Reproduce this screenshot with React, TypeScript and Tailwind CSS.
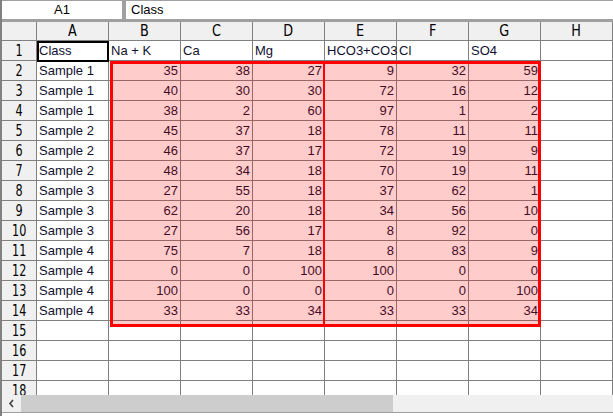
import React from 'react';

const cols = ['A', 'B', 'C', 'D', 'E', 'F', 'G', 'H'];

const header = ['Class', 'Na + K', 'Ca', 'Mg', 'HCO3+CO3', 'Cl', 'SO4'];

const rows: [string, number[]][] = [
  ['Sample 1', [35, 38, 27, 9, 32, 59]],
  ['Sample 1', [40, 30, 30, 72, 16, 12]],
  ['Sample 1', [38, 2, 60, 97, 1, 2]],
  ['Sample 2', [45, 37, 18, 78, 11, 11]],
  ['Sample 2', [46, 37, 17, 72, 19, 9]],
  ['Sample 2', [48, 34, 18, 70, 19, 11]],
  ['Sample 3', [27, 55, 18, 37, 62, 1]],
  ['Sample 3', [62, 20, 18, 34, 56, 10]],
  ['Sample 3', [27, 56, 17, 8, 92, 0]],
  ['Sample 4', [75, 7, 18, 8, 83, 9]],
  ['Sample 4', [0, 0, 100, 100, 0, 0]],
  ['Sample 4', [100, 0, 0, 0, 0, 100]],
  ['Sample 4', [33, 33, 34, 33, 33, 34]],
];

const thin = { fontFamily: '"DejaVu Sans", sans-serif' };
const cellFont = { fontFamily: '"Liberation Sans", Arial, sans-serif' };

function RowHead({ n }: { n: number }) {
  return (
    <div className="w-[35px] h-[20px] shrink-0 bg-[#f0f0f0] border-r border-b border-[#808080] flex items-center justify-center overflow-hidden">
      <span className="inline-block text-[16px] font-normal text-black scale-x-70 leading-none" style={thin}>
        {n}
      </span>
    </div>
  );
}

function Cell({ value, right }: { value?: string | number; right?: boolean }) {
  return (
    <div
      className={`w-[72px] h-[20px] shrink-0 border-r border-b border-[#808080] flex items-center overflow-visible whitespace-nowrap text-[13px] text-[#101030] ${
        right ? 'justify-end pr-[2px]' : 'pl-[2px]'
      }`}
      style={cellFont}
    >
      {value}
    </div>
  );
}

export default function App() {
  return (
    <div className="w-[613px] h-[416px] bg-white border-l-2 border-[#808080] flex flex-col overflow-hidden">
      {/* formula bar */}
      <div className="h-[22px] shrink-0 bg-[#a0a0a0] flex gap-[4px] pt-[1px] pb-[3px] text-[13px] text-black" style={cellFont}>
        <div className="w-[120px] bg-white flex items-center justify-center">A1</div>
        <div className="flex-1 bg-white flex items-center pl-[5px]">Class</div>
      </div>

      {/* grid */}
      <div className="relative flex-1 overflow-hidden">
        <div className="flex h-[19px]">
          <div className="w-[35px] shrink-0 bg-[#f0f0f0] border-r border-b border-[#808080]" />
          {cols.map((c) => (
            <div
              key={c}
              className="w-[72px] shrink-0 bg-[#f0f0f0] border-r border-b border-[#808080] flex items-center justify-center overflow-hidden"
            >
              <span className="inline-block text-[16px] font-normal text-black scale-x-80 leading-none" style={thin}>
                {c}
              </span>
            </div>
          ))}
        </div>

        <div className="flex">
          <RowHead n={1} />
          {header.map((h, i) => (
            <Cell key={i} value={h} />
          ))}
          <Cell />
        </div>

        {rows.map(([name, vals], r) => (
          <div key={r} className="flex">
            <RowHead n={r + 2} />
            <Cell value={name} />
            {vals.map((v, i) => (
              <Cell key={i} value={v} right />
            ))}
            <Cell />
          </div>
        ))}

        {[15, 16, 17, 18].map((n) => (
          <div key={n} className="flex">
            <RowHead n={n} />
            {cols.map((c) => (
              <Cell key={c} />
            ))}
          </div>
        ))}

        {/* active cell */}
        <div className="absolute left-[35px] top-[19px] w-[72px] h-[21px] border-2 border-black pointer-events-none" />

        {/* selected range */}
        <div className="absolute left-[108px] top-[39px] w-[431px] h-[266px] bg-[rgba(255,0,0,0.2)] border-[3px] border-[#ff0000] pointer-events-none" />
        <div className="absolute left-[321px] top-[39px] w-[2px] h-[266px] bg-[#ff0000] pointer-events-none" />
      </div>

      {/* horizontal scrollbar */}
      <div className="h-[17px] shrink-0 flex bg-[#f0f0f0]">
        <div className="w-[19px] flex items-center justify-center">
          <svg width="7" height="9" viewBox="0 0 7 9">
            <path d="M5 1 L2 4.5 L5 8" fill="none" stroke="#404040" strokeWidth="1.6" />
          </svg>
        </div>
        <div className="w-[372px] h-full bg-[#cdcdcd]" />
        <div className="flex-1" />
      </div>
      <div className="h-[4px] shrink-0 border-t border-[#a0a0a0] bg-white" />
    </div>
  );
}
